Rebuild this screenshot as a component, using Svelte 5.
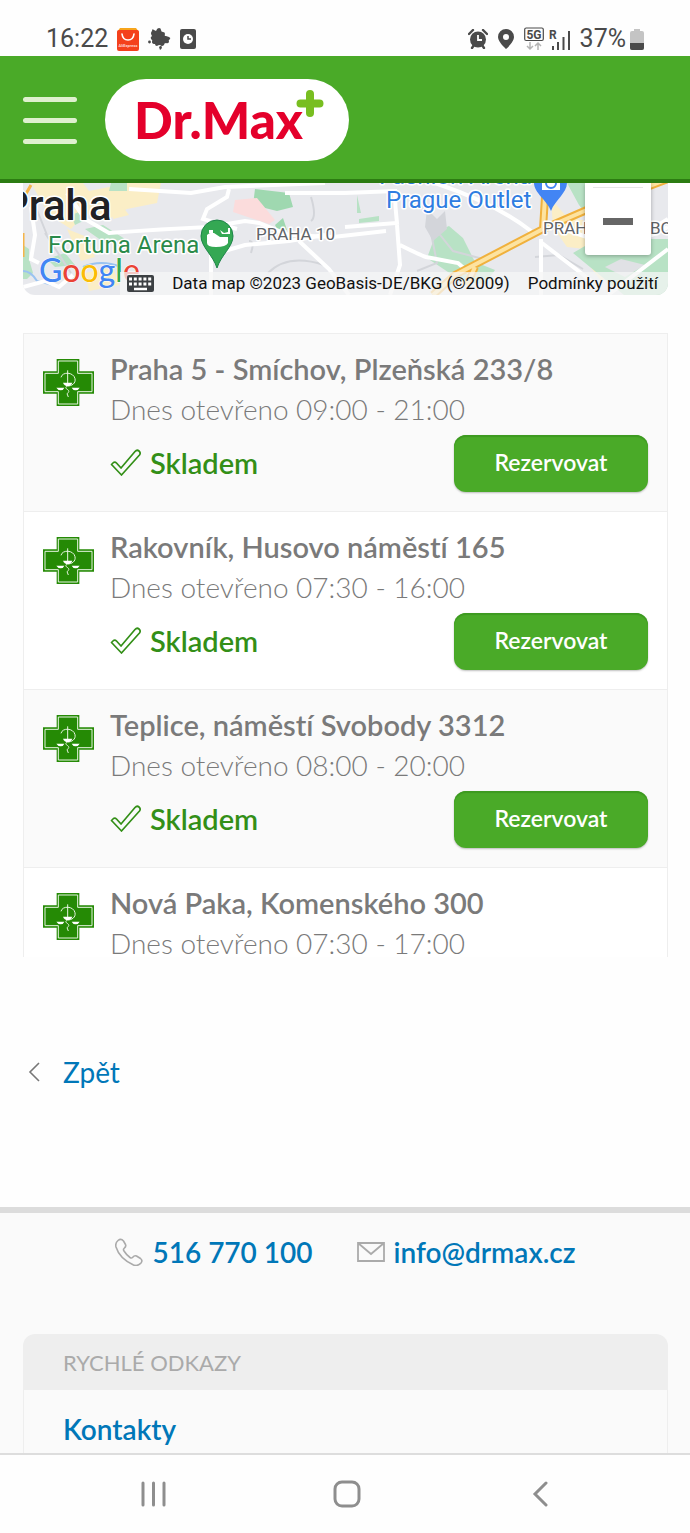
<script>
  const pharmacies = [
    { name: 'Praha 5 - Smíchov, Plzeňská 233/8', hours: '09:00 - 21:00' },
    { name: 'Rakovník, Husovo náměstí 165', hours: '07:30 - 16:00' },
    { name: 'Teplice, náměstí Svobody 3312', hours: '08:00 - 20:00' },
    { name: 'Nová Paka, Komenského 300', hours: '07:30 - 17:00' }
  ];

  const links = ['Kontakty'];
</script>

<div class="screen">
  <div class="status">
    <div class="status-group">
      <span class="status-text">16:22</span>
      <svg class="ali" width="22" height="23" viewBox="0 0 22 23" aria-hidden="true">
        <path d="M3 0h16l3 4H0z" fill="#f7a51c" />
        <rect y="2" width="22" height="21" rx="2" fill="#f4401c" />
        <path d="M5 6c1 8 11 8 12 0" fill="none" stroke="#fff" stroke-width="1.6" stroke-linecap="round" />
        <text x="11" y="19" text-anchor="middle" font-size="4" font-weight="700" fill="#ffd9cf">AliExpress</text>
      </svg>
      <svg width="23" height="22" viewBox="0 0 23 22" fill="#4a4a4a" aria-hidden="true">
        <path d="M4 3q0-3 2-1l2 1q1-3 3-3t2 2q0 2 2 2t2 2q-1 2 1 2l3 1q2 1 1 2-2 1-1 3-1 2-3 1-2 0-2 2-2 2-4 0-2 0-3 1-2 0-2-2-3 0-3-2 1-2-1-3-1-2 1-3-2-3 0-5z" />
        <circle cx="1.5" cy="14" r="1.4" />
        <path d="M11 19q2-2 3 0 0 2-2 3z" />
      </svg>
      <svg width="16" height="20" viewBox="0 0 16 20" aria-hidden="true">
        <rect width="16" height="20" rx="2" fill="#4a4a4a" />
        <circle cx="8" cy="10" r="5" fill="#fff" />
        <path d="M8 7v3h3" fill="none" stroke="#4a4a4a" stroke-width="1.5" />
      </svg>
    </div>
    <div class="status-group right">
      <svg width="20" height="20" viewBox="0 0 20 20" aria-hidden="true">
        <path d="M1 5l4-4M19 5l-4-4M4 19l2-3M16 19l-2-3" stroke="#4a4a4a" stroke-width="2.4" stroke-linecap="round" />
        <circle cx="10" cy="10.500" r="8" fill="#4a4a4a" />
        <path d="M10 6v5h4" fill="none" stroke="#fff" stroke-width="1.8" />
      </svg>
      <svg width="16" height="20" viewBox="0 0 16 20" aria-hidden="true">
        <path d="M8 0a8 8 0 0 0-8 8c0 5 8 12 8 12s8-7 8-12a8 8 0 0 0-8-8zm0 5a3 3 0 1 1 0 6 3 3 0 0 1 0-6z" fill="#4a4a4a" />
      </svg>
      <svg width="46" height="24" viewBox="0 0 46 24" aria-hidden="true">
        <rect x="0.700" y="1" width="18.600" height="12.500" rx="1.500" fill="none" stroke="#4a4a4a" stroke-width="1.200" />
        <text x="10" y="11.500" text-anchor="middle" font-size="12" font-weight="700" fill="#4a4a4a">5G</text>
        <path d="M6 15v7M3 19l3 3 3-3M14 23v-7M11 19l3-3 3 3" fill="none" stroke="#b4b4b4" stroke-width="1.500" />
        <text x="25" y="12" font-size="12" font-weight="700" fill="#4a4a4a">R</text>
        <path d="M29 23v-4M34 23v-8M39.500 23V10M45 23V4" stroke="#4a4a4a" stroke-width="2" />
      </svg>
      <div class="battery">
        <span class="status-text">37%</span>
        <svg width="14" height="21" viewBox="0 0 14 21" aria-hidden="true">
          <path d="M4 0h6v2h2a2 2 0 0 1 2 2v15a2 2 0 0 1-2 2H2a2 2 0 0 1-2-2V4a2 2 0 0 1 2-2h2z" fill="#c4c4c4" />
          <path d="M0 14h14v5a2 2 0 0 1-2 2H2a2 2 0 0 1-2-2z" fill="#4a4a4a" />
        </svg>
      </div>
    </div>
  </div>

  <header>
    <button class="menu" aria-label="Menu">
      <span></span>
      <span></span>
      <span></span>
    </button>
    <a class="logo" href="/" aria-label="Dr.Max">
      <svg width="244" height="82" viewBox="0 0 244 82">
        <text x="29" y="60" font-size="51" font-weight="900" fill="#e4002b">Dr.Max</text>
        <path d="M205 15v19M195.500 24.500h19" stroke="#78be20" stroke-width="8" stroke-linecap="round" />
      </svg>
    </a>
  </header>

  <main>
    <section class="map" aria-label="Mapa">
      <svg class="tiles" viewBox="0 0 645 112" preserveAspectRatio="xMidYMid slice">
        <rect width="645" height="112" fill="#e8e9ed" />
        <g fill="#fbeec6">
          <path d="M8 0h52l6 8 20-4 18-4h34l-4 20-30 6-22 12-20-8-14 16-22-14z" />
          <path d="M44 46l20 8 8 20-14 4zM88 28l12-4 6 8-16 4zM62 90l28-6 6 18-30 6z" />
          <path d="M528 16l16 18 20 4-2 28-18-2-14-20zM566 82l14-4 8 14-10 6z" />
        </g>
        <g fill="#b8e2c5">
          <path d="M88 0h16v8H86zM48 32l16-6-4 12-8 4zM0 62l6 4v10l4 14-6 6H0zM62 46l18-4 22 14-20 4zM24 76l18-6 10 12-20 2z" />
          <path d="M334 12l4 18h-4zM336 36l20-3v5l-20 2z" />
          <path d="M414 48l12-5 14 12 12 24 20 8-10 14-22-2-36-24z" />
          <path d="M544 0h58v24l-30 18-16-20zM550 70l24-14h71v56h-44z" />
        </g>
        <g fill="#9fd8b0">
          <path d="M232 6l34 4 4 14-16 4-24-6zM252 42l8-7 4 12-8 3z" />
        </g>
        <path d="M212 17l22-2 18 22-6 4-36-12z" fill="#fbdcdc" />
        <path d="M582 84l16-8 24 6-20 12z" fill="#e0e1e5" />
        <path d="M0 88q8 0 14 10l24 6M60 84q18-8 38 0M604 28q2-16 20-24" fill="none" stroke="#9ac3f1" stroke-width="2" />
        <g fill="none" stroke="#d3d5da" stroke-width="2">
          <path d="M22 50l26 40M12 22l12 30M288 14q6 20 0 24M226 58q6 0 2 12M245 90q20-20 56-8M408 50l6 30-20 8M414 48l16 20 30 8M512 74l24-2 24 14" />
        </g>
        <path d="M404 26l10 10 8-8 2 18-14 12-8-14z" fill="#d3d5da" />
        <g fill="none" stroke="#fff" stroke-width="4">
          <path d="M44 10l18 26 24 14q54-4 100-6l36-6 14 2 30 12 44 2 53-6M106 6l62 4 34-6 100-4M206 6l-2 8-20 12-4 10 34 10M188 112V72l34-10 44-4 36-6M0 104l22-6 14 6 14-12M8 24l4 28-4 24 8 4M276 58l30 28 20 26" />
          <path d="M322 10l50-2q0 16 2 32l-52 4M322 10h-60M374 42l3 40-10 30M377 62q20 10 26 12l32 6 16 14M412 0q60 20 96 48M518 56v56M519 60l52 40M540 46l60 20 45-22M606 60l39-24M645 66l-60 46" />
        </g>
        <g fill="none">
          <path d="M0 16l8-14M0 50v24" stroke="#f5b54a" stroke-width="3" />
          <path d="M522 14l-2 32-88 46-22 20M452 84l-8 18M520 46l46-20 79-30" stroke="#f0b13d" stroke-width="8" />
          <path d="M522 14l-2 32-88 46-22 20M452 84l-8 18M520 46l46-20 79-30" stroke="#fde3a0" stroke-width="4" />
        </g>
        <path d="M194 37a16 16 0 0 0-16 16c0 11 12 19 16 32 4-13 16-21 16-32a16 16 0 0 0-16-16z" fill="#34a853" stroke="#1e8449" />
        <path d="M184 52q3-3 7-2l6 4 8 0v6q-2 4-12 4-9 0-9-4zM186 47h4v3h-4zM197 47l4 3 4-1v-4h2v6h-8z" fill="#fff" />
        <path d="M511 0h33c0 10-12 17-16 28-4-11-17-18-17-28z" fill="#4285f4" />
        <path d="M519 0h18v7h-18z" fill="#fff" />
        <path d="M523 0a5 5 0 0 0 10 0" fill="none" stroke="#4285f4" stroke-width="2" />
        <g class="labels">
          <text class="city" x="-21" y="37">Praha</text>
          <text class="arena" x="25" y="70">Fortuna Arena</text>
          <text class="district" x="233" y="57">PRAHA 10</text>
          <text class="outlet" x="356" y="1">Fashion Arena</text>
          <text class="outlet" x="363" y="25">Prague Outlet</text>
          <text class="district" x="520" y="51">PRAHA</text>
          <text class="district" x="627" y="51">BO</text>
          <text class="google" x="16" y="99"><tspan fill="#4285f4">G</tspan><tspan fill="#ea4335">o</tspan><tspan fill="#fbbc05">o</tspan><tspan fill="#4285f4">g</tspan><tspan fill="#34a853">l</tspan><tspan fill="#ea4335">e</tspan></text>
        </g>
      </svg>
      <button class="zoom-out" aria-label="Oddálit"><span></span></button>
      <div class="attribution">
        <button class="keys" aria-label="Klávesové zkratky">
          <svg width="27" height="17" viewBox="0 0 27 17">
            <rect width="27" height="17" rx="2" fill="#3c4043" />
            <path d="M2 4h23M2 9h23" stroke="#fff" stroke-width="3" stroke-dasharray="3 1.800" />
            <path d="M7 14h13" stroke="#fff" stroke-width="2.500" />
          </svg>
        </button>
        <span>Data map ©2023 GeoBasis-DE/BKG (©2009)</span>
        <a href="#terms">Podmínky použití</a>
      </div>
    </section>

    <ul class="list">
      {#each pharmacies as pharmacy}
        <li>
          <svg class="cross" width="51" height="47" viewBox="0 0 153 141" aria-hidden="true">
            <path d="M41 0h68v37h44v67h-44v37H41v-37H0V37h41z" fill="#258a05" />
            <path d="M46 6h58v37h43v55h-43v37H46V98H6V43h40z" fill="none" stroke="#e6f4e1" stroke-width="3" />
            <g fill="none" stroke="#e6f4e1" stroke-width="3">
              <path d="M54 55c4-18 38-16 42 4 3 14-10 22-22 22-8 2-6 8 0 11 6 4 3 9-2 12l4 10M74 34v42" />
            </g>
            <path d="M60 71h28q-4 10-14 10t-14-10zM40 86h24q-3 8-11 8t-13-8zM86 86h24q-4 8-12 8t-12-8z" fill="#fff" />
          </svg>
          <div class="info">
            <h3>{pharmacy.name}</h3>
            <p>Dnes otevřeno {pharmacy.hours}</p>
            <div class="actions">
              <span class="stock">
                <svg width="31" height="28" viewBox="0 0 31 28" aria-hidden="true">
                  <path d="M1.500 15.500l2-2q1.500-1 3 .500l4.500 5L25 2.500q2-2.200 4-.500t.500 4L11.500 26z" fill="none" stroke="#338f17" stroke-width="1.700" stroke-linejoin="round" />
                </svg>
                Skladem
              </span>
              <button class="reserve">Rezervovat</button>
            </div>
          </div>
        </li>
      {/each}
    </ul>

    <a class="back" href="#back">
      <svg width="12" height="20" viewBox="0 0 12 20" aria-hidden="true">
        <path d="M11 1L2 10l9 9" fill="none" stroke="#777" stroke-width="1.600" />
      </svg>
      Zpět
    </a>
  </main>

  <footer>
    <div class="contacts">
      <a href="tel:516770100">
        <svg width="28" height="28" viewBox="0 0 28 28" aria-hidden="true">
          <path d="M3 2.500q3-2.500 5.500.500l2 3.500q1 2-1.500 4-1 1 0 2.500 2.500 4 6 6.500 1.500 1 2.500 0 2-2.500 4-1.500l4 2.500q2.500 2 .500 4.500-3 3.500-7.500 2Q4.500 20.500 1 9 0 5 3 2.500z" fill="none" stroke="#aaa" stroke-width="1.600" />
        </svg>
        516 770 100
      </a>
      <a href="mailto:info@drmax.cz">
        <svg width="28" height="20" viewBox="0 0 28 20" aria-hidden="true">
          <path d="M1 1h26v18H1zl13 11L27 1" fill="none" stroke="#aaa" stroke-width="1.800" />
        </svg>
        info@drmax.cz
      </a>
    </div>
    <section class="panel">
      <h2>RYCHLÉ ODKAZY</h2>
      {#each links as link}
        <a href="#kontakty">{link}</a>
      {/each}
    </section>
  </footer>

  <nav>
    <button aria-label="Poslední aplikace">
      <svg width="26" height="26" viewBox="0 0 26 26">
        <path d="M2 2v22M12.500 2v22M23 2v22" stroke="#8e8e8e" stroke-width="3" stroke-linecap="round" />
      </svg>
    </button>
    <button aria-label="Domů">
      <svg width="28" height="28" viewBox="0 0 28 28">
        <rect x="2" y="2" width="24" height="24" rx="7" fill="none" stroke="#8e8e8e" stroke-width="3" />
      </svg>
    </button>
    <button aria-label="Zpět">
      <svg width="16" height="26" viewBox="0 0 16 26">
        <path d="M14 2L3 13l11 11" fill="none" stroke="#8e8e8e" stroke-width="3" stroke-linecap="round" />
      </svg>
    </button>
  </nav>
</div>

<style>
  :global(body) {
    margin: 0;
    background: #fefefe;
  }

  .screen {
    display: flex;
    flex-direction: column;
    min-height: 100vh;
    font-family: Lato, 'Open Sans', sans-serif;
    font-size: 28px;
    font-variant-ligatures: none;
    color: #7a7a7a;
  }

  svg {
    display: block;
    flex-shrink: 0;
  }

  button {
    padding: 0;
    border: none;
    background: none;
    font-family: inherit;
    cursor: pointer;
  }

  a {
    color: #0077b8;
    text-decoration: none;
  }

  .status {
    display: flex;
    justify-content: space-between;
    height: 34px;
    padding: 22px 46px 0 46px;
    font-family: Roboto, sans-serif;
    color: #4a4a4a;
  }

  .status-group {
    display: flex;
    align-items: center;
    gap: 9px;
    height: 34px;
  }

  .status-group.right {
    gap: 10px;
  }

  .status-text {
    font-size: 25px;
    line-height: 34px;
  }

  .battery {
    display: flex;
    align-items: center;
    gap: 4px;
  }

  header {
    display: flex;
    align-items: center;
    gap: 28px;
    padding: 23px 23px 18px;
    background: #4aaa28;
    border-bottom: 4px solid #2c7c12;
  }

  .menu {
    display: flex;
    flex-direction: column;
    gap: 16px;
    width: 54px;
  }

  .menu span {
    height: 5px;
    border-radius: 3px;
    background: #dff0cf;
  }

  .logo {
    border-radius: 41px;
    background: #fff;
  }

  main {
    padding: 0 22px 0 23px;
  }

  .map {
    position: relative;
    overflow: hidden;
    border-radius: 0 0 12px 12px;
  }

  .tiles {
    width: 100%;
    height: 112px;
    font-family: Roboto, sans-serif;
  }

  .labels text {
    paint-order: stroke;
    stroke: #fff;
    stroke-width: 3px;
    stroke-linejoin: round;
  }

  .labels .city {
    font-size: 42px;
    font-weight: 500;
    fill: #202124;
  }

  .labels .arena {
    font-size: 24px;
    fill: #2a8a4a;
  }

  .labels .outlet {
    font-size: 24px;
    fill: #2f7de1;
  }

  .labels .district {
    font-size: 17px;
    fill: #5f6368;
  }

  .labels .google {
    font-family: Lato, sans-serif;
    font-size: 32px;
    font-weight: 500;
    stroke-width: 1px;
  }

  .zoom-out {
    position: absolute;
    top: 0;
    right: 17px;
    display: flex;
    flex-direction: column;
    align-items: center;
    gap: 30px;
    width: 66px;
    height: 72px;
    padding-top: 4px;
    border-radius: 0 0 3px 3px;
    background: #fff;
    box-shadow: 0 1px 4px rgba(0, 0, 0, 0.3);
  }

  .zoom-out::before {
    content: '';
    width: 50px;
    height: 1px;
    background: #e6e6e6;
  }

  .zoom-out span {
    width: 30px;
    height: 7px;
    background: #666;
  }

  .attribution {
    position: absolute;
    right: 0;
    bottom: 0;
    display: flex;
    align-items: center;
    gap: 18px;
    height: 23px;
    padding: 0 10px 0 7px;
    background: rgba(245, 245, 245, 0.75);
    font-family: Roboto, sans-serif;
    font-size: 17px;
    line-height: 23px;
    color: #111;
    white-space: nowrap;
  }

  .attribution a {
    color: #111;
  }

  .list {
    max-height: 624px;
    margin: 38px 0 0;
    padding: 0;
    overflow-y: auto;
    scrollbar-width: none;
    list-style: none;
  }

  li {
    display: flex;
    gap: 16px;
    padding: 15px 19px 19px;
    border: 1px solid #eee;
    border-bottom: none;
    background: #fff;
  }

  li:nth-child(odd) {
    background: #fafafa;
  }

  .cross {
    margin-top: 10px;
  }

  .info {
    flex: 1;
    min-width: 0;
  }

  h3,
  p {
    margin: 0;
    font-size: 28px;
    line-height: 40px;
    white-space: nowrap;
  }

  h3 {
    font-size: 29px;
    font-weight: 600;
  }

  p {
    font-weight: 300;
  }

  .actions {
    display: flex;
    justify-content: space-between;
    align-items: center;
    margin-top: 6px;
  }

  .stock {
    display: flex;
    align-items: center;
    gap: 9px;
    padding-bottom: 2px;
    font-size: 29px;
    font-weight: 600;
    line-height: 40px;
    color: #338f17;
  }

  .reserve {
    width: 194px;
    height: 57px;
    padding-bottom: 3px;
    border-radius: 12px;
    background: #4aaa28;
    box-shadow: 0 1px 2px rgba(0, 0, 0, 0.25), inset 0 2px 1px #3d9a20;
    font-size: 23px;
    font-weight: 600;
    color: #fff;
  }

  .back {
    display: flex;
    align-items: center;
    gap: 23px;
    padding: 95px 0 115px 5px;
    line-height: 40px;
  }

  footer {
    flex: 1;
    padding: 0 22px 0 23px;
    border-top: 6px solid #dcdcdc;
    background: #fafafa;
  }

  .contacts {
    display: flex;
    justify-content: center;
    gap: 44px;
    padding: 19px 0 62px;
    font-weight: 600;
    line-height: 40px;
  }

  .contacts a {
    display: flex;
    align-items: center;
    gap: 9px;
  }

  .panel h2 {
    margin: 0;
    padding: 9px 40px 7px;
    border-radius: 12px 12px 0 0;
    background: #eee;
    font-size: 22px;
    font-weight: 400;
    line-height: 40px;
    color: #aaa;
  }

  .panel a {
    display: block;
    padding: 19px 39px 4px;
    border: solid #eee;
    border-width: 0 1px;
    font-weight: 600;
    line-height: 40px;
  }

  nav {
    display: grid;
    grid-template-columns: repeat(3, 1fr);
    height: 78px;
    padding: 0 54px 0 57px;
    border-top: 2px solid #ddd;
    background: #fefefe;
  }

  nav button {
    display: grid;
    place-items: center;
  }
</style>
